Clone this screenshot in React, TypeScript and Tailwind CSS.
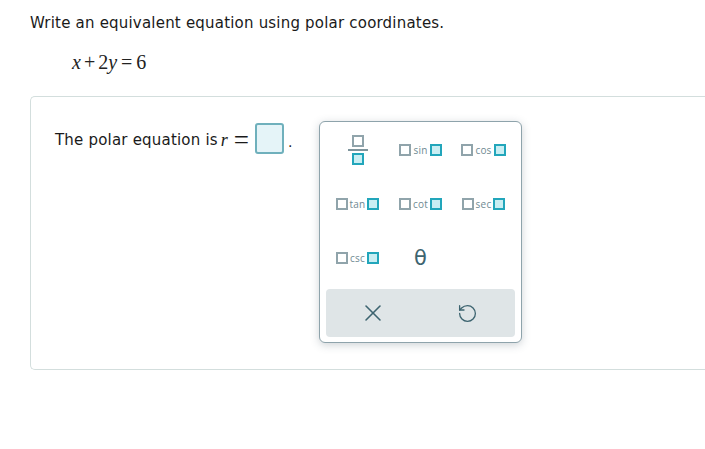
import { X, RotateCcw } from "lucide-react";

function Box({ filled }: { filled?: boolean }) {
  if (filled) {
    return <span className="inline-block w-[12px] h-[12px] border-2 border-[#22a6bb] bg-[#c9eef3]" />;
  }
  return <span className="inline-block w-[12px] h-[12px] border-2 border-[#90a4ab] bg-white" />;
}

function TrigKey({ name }: { name: string }) {
  return (
    <div className="flex items-center justify-center gap-[2px]">
      <Box />
      <span className="text-[10px] leading-none text-[#6f8a93]" style={{ fontFamily: "'Open Sans', 'Noto Sans', sans-serif" }}>
        {name}
      </span>
      <Box filled />
    </div>
  );
}

function Keypad() {
  return (
    <div className="absolute left-[288px] top-[24px] w-[203px] rounded-[6px] border border-[#8ea3ab] bg-white px-[6px] pt-[1px] pb-[5px] shadow-[0_2px_8px_rgba(60,80,90,0.25)]">
      <div className="grid grid-cols-3">
        <div className="flex h-[54px] flex-col items-center justify-center">
          <Box />
          <span className="my-[2px] block h-[2px] w-[20px] bg-[#7d949c]" />
          <Box filled />
        </div>
        <div className="flex h-[54px] items-center justify-center">
          <TrigKey name="sin" />
        </div>
        <div className="flex h-[54px] items-center justify-center">
          <TrigKey name="cos" />
        </div>
        <div className="flex h-[54px] items-center justify-center">
          <TrigKey name="tan" />
        </div>
        <div className="flex h-[54px] items-center justify-center">
          <TrigKey name="cot" />
        </div>
        <div className="flex h-[54px] items-center justify-center">
          <TrigKey name="sec" />
        </div>
        <div className="flex h-[54px] items-center justify-center">
          <TrigKey name="csc" />
        </div>
        <div className="flex h-[54px] items-center justify-center">
          <span className="text-[21px] leading-none text-[#3d6470]" style={{ fontFamily: "'DejaVu Sans', sans-serif" }}>
            θ
          </span>
        </div>
        <div className="h-[54px]" />
      </div>
      <div className="mt-[4px] grid h-[48px] grid-cols-2 rounded-[4px] bg-[#dfe5e7]">
        <div className="flex items-center justify-center">
          <X size={28} strokeWidth={1.3} color="#3d6470" />
        </div>
        <div className="flex items-center justify-center">
          <RotateCcw size={21} strokeWidth={1.5} color="#3d6470" />
        </div>
      </div>
    </div>
  );
}

export default function App() {
  return (
    <div className="min-h-[449px] w-full overflow-hidden bg-white pt-[13px] text-[15px] tracking-[0.2px] text-[#1a1a1a]" style={{ fontFamily: "'DejaVu Sans', Verdana, sans-serif" }}>
      <p className="pl-[30px] leading-[20px]">Write an equivalent equation using polar coordinates.</p>

      <div className="mt-[17px] pl-[72px] text-[20px] leading-[24px] tracking-normal text-[#222]" style={{ fontFamily: "'Liberation Serif', serif" }}>
        <i>x</i>
        <span className="mx-[3px]">+</span>
        <span>2</span>
        <i>y</i>
        <span className="mx-[4px]">=</span>
        <span>6</span>
      </div>

      <div className="relative ml-[30px] mt-[22px] h-[274px] rounded-l-[5px] border border-r-0 border-[#d3dedd] pl-[24px] pt-[26px]">
        <div className="flex items-center">
          <span className="mt-[2px] leading-[20px]">The polar equation is</span>
          <i className="ml-[3px] mt-[2px] text-[18px] leading-[20px] tracking-normal" style={{ fontFamily: "'Liberation Serif', serif" }}>
            r
          </i>
          <span className="ml-[6px] mt-[2px] text-[27px] leading-[20px] tracking-normal" style={{ fontFamily: "'Liberation Serif', serif" }}>
            =
          </span>
          <span className="ml-[6px] inline-block h-[31px] w-[29px] rounded-[3px] border-2 border-[#6fb0bc] bg-[#e5f4f8]" />
          <span className="ml-[4px] mt-[8px] text-[14px]">.</span>
        </div>
        <Keypad />
      </div>
    </div>
  );
}
